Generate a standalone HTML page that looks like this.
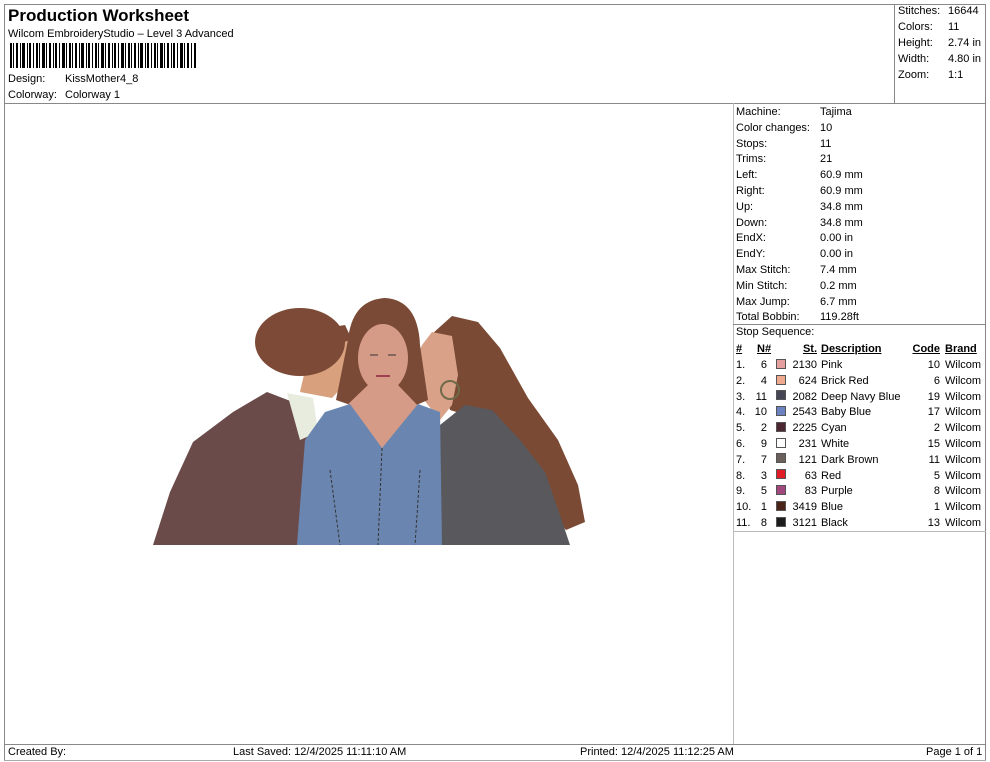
<!DOCTYPE html>
<html><head><meta charset="utf-8"><style>
*{margin:0;padding:0;box-sizing:border-box}
body{width:990px;height:762px;background:#fff;font-family:"Liberation Sans",Arial,sans-serif;font-size:11px;color:#000;position:relative;overflow:hidden}
.a{position:absolute;white-space:nowrap;line-height:13px}
.l{position:absolute;background:#888}
u{text-decoration:underline}
.r{text-align:right}
.sw{position:absolute;width:10px;height:10px;border:1px solid #555}
</style></head><body>
<!-- frame lines -->
<div class="l" style="left:4px;top:4px;width:982px;height:1px"></div>
<div class="l" style="left:4px;top:4px;width:1px;height:757px"></div>
<div class="l" style="left:985px;top:4px;width:1px;height:757px"></div>
<div class="l" style="left:4px;top:103px;width:982px;height:1px"></div>
<div class="l" style="left:894px;top:4px;width:1px;height:100px"></div>
<div class="l" style="left:733px;top:103px;width:1px;height:641px;background:#bbb"></div>
<div class="l" style="left:733px;top:324px;width:253px;height:1px"></div>
<div class="l" style="left:733px;top:531px;width:253px;height:1px;background:#bbb"></div>
<div class="l" style="left:4px;top:744px;width:982px;height:1px"></div>
<div class="l" style="left:4px;top:760px;width:982px;height:1px;background:#aaa"></div>

<div class="a" style="left:8px;top:7px;font-size:17px;font-weight:bold;line-height:18px">Production Worksheet</div>
<div class="a" style="left:8px;top:28px">Wilcom EmbroideryStudio – Level 3 Advanced</div>
<svg style="position:absolute;left:10px;top:43px" width="187" height="25">
<g fill="#000">
<rect x="0" y="0" width="2" height="25"/><rect x="3" y="0" width="1" height="25"/><rect x="6" y="0" width="2" height="25"/><rect x="10" y="0" width="1" height="25"/><rect x="12" y="0" width="3" height="25"/><rect x="17" y="0" width="1" height="25"/><rect x="19" y="0" width="2" height="25"/><rect x="23" y="0" width="1" height="25"/><rect x="26" y="0" width="2" height="25"/><rect x="29" y="0" width="1" height="25"/><rect x="32" y="0" width="3" height="25"/><rect x="36" y="0" width="1" height="25"/><rect x="39" y="0" width="2" height="25"/><rect x="43" y="0" width="1" height="25"/><rect x="45" y="0" width="2" height="25"/><rect x="49" y="0" width="1" height="25"/><rect x="52" y="0" width="3" height="25"/><rect x="56" y="0" width="1" height="25"/><rect x="59" y="0" width="2" height="25"/><rect x="62" y="0" width="1" height="25"/><rect x="65" y="0" width="2" height="25"/><rect x="69" y="0" width="1" height="25"/><rect x="71" y="0" width="3" height="25"/><rect x="76" y="0" width="1" height="25"/><rect x="78" y="0" width="2" height="25"/><rect x="82" y="0" width="1" height="25"/><rect x="85" y="0" width="2" height="25"/><rect x="88" y="0" width="1" height="25"/><rect x="91" y="0" width="3" height="25"/><rect x="95" y="0" width="1" height="25"/><rect x="98" y="0" width="2" height="25"/><rect x="102" y="0" width="1" height="25"/><rect x="104" y="0" width="2" height="25"/><rect x="108" y="0" width="1" height="25"/><rect x="111" y="0" width="3" height="25"/><rect x="115" y="0" width="1" height="25"/><rect x="118" y="0" width="2" height="25"/><rect x="121" y="0" width="1" height="25"/><rect x="124" y="0" width="2" height="25"/><rect x="128" y="0" width="1" height="25"/><rect x="130" y="0" width="3" height="25"/><rect x="135" y="0" width="1" height="25"/><rect x="137" y="0" width="2" height="25"/><rect x="141" y="0" width="1" height="25"/><rect x="144" y="0" width="2" height="25"/><rect x="147" y="0" width="1" height="25"/><rect x="150" y="0" width="3" height="25"/><rect x="154" y="0" width="1" height="25"/><rect x="157" y="0" width="2" height="25"/><rect x="161" y="0" width="1" height="25"/><rect x="163" y="0" width="2" height="25"/><rect x="167" y="0" width="1" height="25"/><rect x="170" y="0" width="3" height="25"/><rect x="174" y="0" width="1" height="25"/><rect x="177" y="0" width="2" height="25"/><rect x="181" y="0" width="1" height="25"/><rect x="184" y="0" width="2" height="25"/>
</g></svg>
<div class="a" style="left:8px;top:73px">Design:</div><div class="a" style="left:65px;top:73px">KissMother4_8</div>
<div class="a" style="left:8px;top:89px">Colorway:</div><div class="a" style="left:65px;top:89px">Colorway 1</div>

<div class="a" style="left:898px;top:5px">Stitches:</div><div class="a" style="left:948px;top:5px">16644</div>
<div class="a" style="left:898px;top:21px">Colors:</div><div class="a" style="left:948px;top:21px">11</div>
<div class="a" style="left:898px;top:37px">Height:</div><div class="a" style="left:948px;top:37px">2.74 in</div>
<div class="a" style="left:898px;top:53px">Width:</div><div class="a" style="left:948px;top:53px">4.80 in</div>
<div class="a" style="left:898px;top:69px">Zoom:</div><div class="a" style="left:948px;top:69px">1:1</div>

<div style="position:absolute;left:736px;top:105px;line-height:15.8px">
Machine:<br>Color changes:<br>Stops:<br>Trims:<br>Left:<br>Right:<br>Up:<br>Down:<br>EndX:<br>EndY:<br>Max Stitch:<br>Min Stitch:<br>Max Jump:<br>Total Bobbin:</div>
<div style="position:absolute;left:820px;top:105px;line-height:15.8px">
Tajima<br>10<br>11<br>21<br>60.9 mm<br>60.9 mm<br>34.8 mm<br>34.8 mm<br>0.00 in<br>0.00 in<br>7.4 mm<br>0.2 mm<br>6.7 mm<br>119.28ft</div>
<div class="a" style="left:736px;top:326px">Stop Sequence:</div>

<div style="position:absolute;left:736px;top:342px;line-height:15.8px;font-weight:bold"><u>#</u></div>
<div style="position:absolute;left:757px;top:342px;line-height:15.8px;font-weight:bold"><u>N#</u></div>
<div style="position:absolute;left:780px;top:342px;width:37px;text-align:right;line-height:15.8px;font-weight:bold"><u>St.</u></div>
<div style="position:absolute;left:821px;top:342px;line-height:15.8px;font-weight:bold"><u>Description</u></div>
<div style="position:absolute;left:905px;top:342px;width:35px;text-align:right;line-height:15.8px;font-weight:bold"><u>Code</u></div>
<div style="position:absolute;left:945px;top:342px;line-height:15.8px;font-weight:bold"><u>Brand</u></div>

<div style="position:absolute;left:736px;top:358px;line-height:15.8px">1.<br>2.<br>3.<br>4.<br>5.<br>6.<br>7.<br>8.<br>9.<br>10.<br>11.</div>
<div style="position:absolute;left:752px;top:358px;width:15px;text-align:right;line-height:15.8px">6<br>4<br>11<br>10<br>2<br>9<br>7<br>3<br>5<br>1<br>8</div>
<div style="position:absolute;left:780px;top:358px;width:37px;text-align:right;line-height:15.8px">2130<br>624<br>2082<br>2543<br>2225<br>231<br>121<br>63<br>83<br>3419<br>3121</div>
<div style="position:absolute;left:821px;top:358px;line-height:15.8px">Pink<br>Brick Red<br>Deep Navy Blue<br>Baby Blue<br>Cyan<br>White<br>Dark Brown<br>Red<br>Purple<br>Blue<br>Black</div>
<div style="position:absolute;left:905px;top:358px;width:35px;text-align:right;line-height:15.8px">10<br>6<br>19<br>17<br>2<br>15<br>11<br>5<br>8<br>1<br>13</div>
<div style="position:absolute;left:945px;top:358px;line-height:15.8px">Wilcom<br>Wilcom<br>Wilcom<br>Wilcom<br>Wilcom<br>Wilcom<br>Wilcom<br>Wilcom<br>Wilcom<br>Wilcom<br>Wilcom</div>

<div class="sw" style="left:776px;top:359px;background:#e3a09e"></div>
<div class="sw" style="left:776px;top:375px;background:#eea98e"></div>
<div class="sw" style="left:776px;top:390px;background:#454556"></div>
<div class="sw" style="left:776px;top:406px;background:#6a82bf"></div>
<div class="sw" style="left:776px;top:422px;background:#4e2630"></div>
<div class="sw" style="left:776px;top:438px;background:#fff"></div>
<div class="sw" style="left:776px;top:453px;background:#6b605c"></div>
<div class="sw" style="left:776px;top:469px;background:#e01c24"></div>
<div class="sw" style="left:776px;top:485px;background:#a0487c"></div>
<div class="sw" style="left:776px;top:501px;background:#4a2418"></div>
<div class="sw" style="left:776px;top:517px;background:#1c1c1c"></div>

<svg style="position:absolute;left:0;top:0" width="733" height="740">
<!-- right woman hair back -->
<path d="M432,334 L452,316 L478,322 L500,348 L528,398 L558,440 L578,485 L585,522 L566,530 L540,500 L510,465 L482,420 L450,410 Z" fill="#7b4a35"/>
<!-- right woman clothes -->
<path d="M440,425 L465,405 L492,410 L520,440 L545,472 L560,515 L570,545 L440,545 Z" fill="#59585c"/>
<!-- right face -->
<path d="M432,332 L452,336 L458,375 L452,405 L440,420 L420,395 L412,370 L422,345 Z" fill="#d9a288"/>
<circle cx="450" cy="390" r="9" fill="none" stroke="#6f6a4a" stroke-width="2"/>
<!-- man jacket -->
<path d="M153,545 L170,492 L193,442 L233,412 L267,392 L293,402 L307,428 L307,545 Z" fill="#6b4a4a"/>
<path d="M287,393 L313,398 L318,432 L300,440 Z" fill="#e8ecde"/>
<!-- man face -->
<path d="M312,340 L352,332 L358,370 L332,398 L300,392 Z" fill="#d8a07c"/>
<!-- man hair -->
<ellipse cx="300" cy="342" rx="45" ry="34" fill="#7c4a36"/>
<path d="M315,330 L345,325 L352,340 L330,345 Z" fill="#7c4a36"/>
<!-- middle hair -->
<path d="M348,340 Q352,300 385,298 Q418,300 420,345 L428,400 L405,410 L365,410 L336,400 Z" fill="#7a4a36"/>
<!-- middle face -->
<ellipse cx="383" cy="358" rx="25" ry="34" fill="#d59b87"/>
<path d="M368,385 L398,385 L422,410 L382,448 L342,410 Z" fill="#d59b87"/>
<!-- blue shirt -->
<path d="M297,545 L305,440 L325,412 L350,404 L382,448 L418,404 L440,412 L442,545 Z" fill="#6a86b0"/>
<g stroke="#333" stroke-width="1" fill="none" stroke-dasharray="3,2">
<path d="M382,448 L378,545"/><path d="M330,470 L340,545"/><path d="M420,470 L415,545"/>
</g>
<path d="M370,355 L378,355 M388,355 L396,355" stroke="#333" stroke-width="1"/>
<path d="M376,376 L390,376" stroke="#a04050" stroke-width="2"/>
</svg>

<div class="a" style="left:8px;top:746px">Created By:</div>
<div class="a" style="left:233px;top:746px">Last Saved: 12/4/2025 11:11:10 AM</div>
<div class="a" style="left:580px;top:746px">Printed: 12/4/2025 11:12:25 AM</div>
<div class="a" style="left:926px;top:746px">Page 1 of 1</div>
</body></html>
